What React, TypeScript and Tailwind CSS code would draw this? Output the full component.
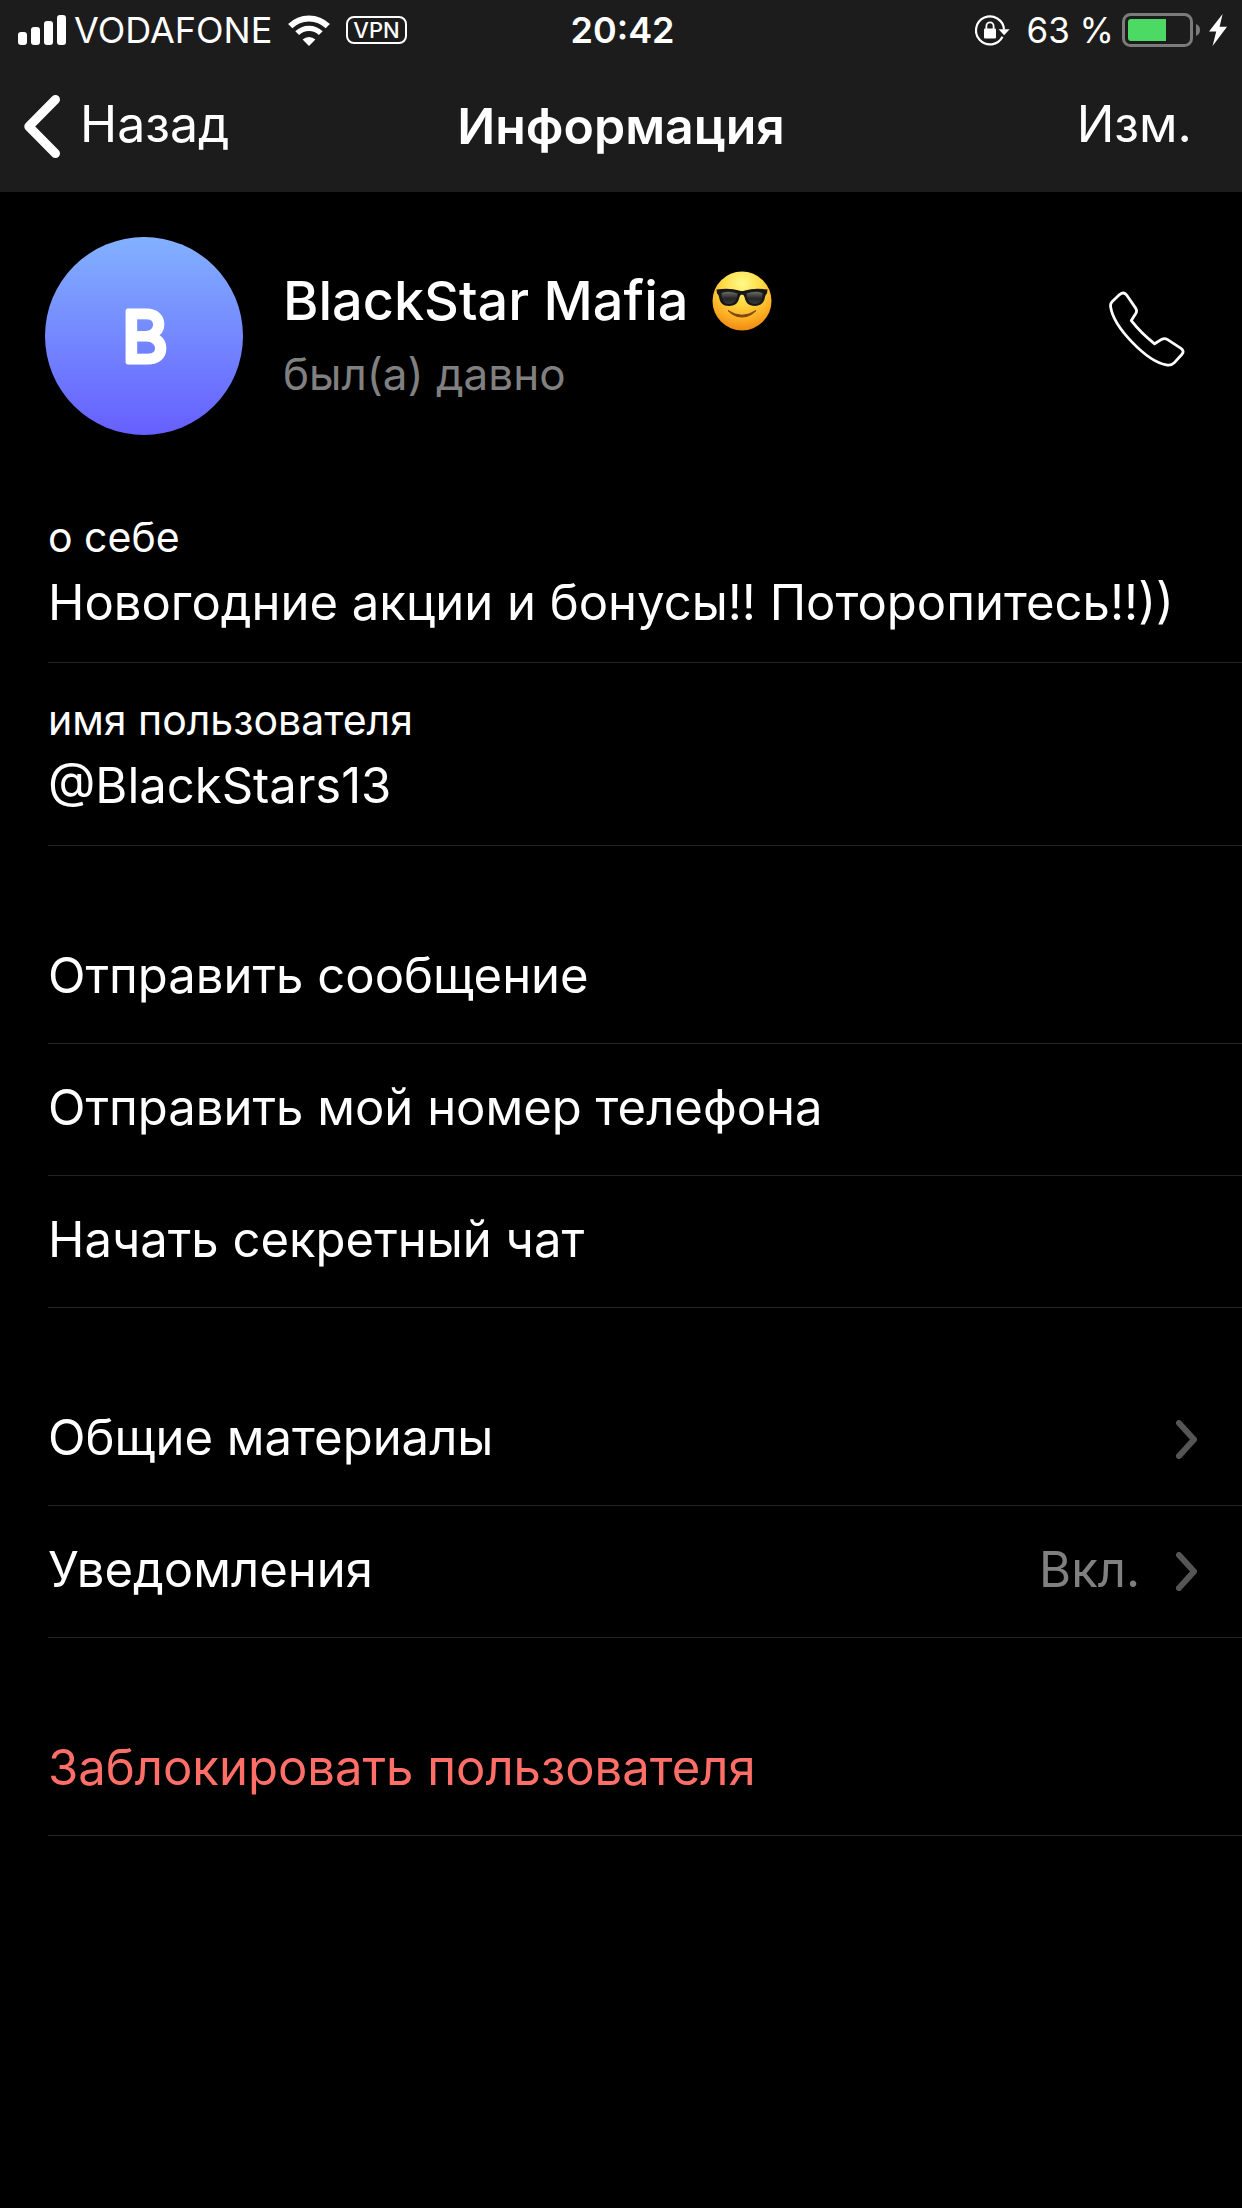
import type { ReactNode } from "react";

interface InfoFieldProps {
  label: string;
  value: string;
}

interface ActionRowProps {
  label: string;
  value?: string;
  chevron?: boolean;
  danger?: boolean;
}

function SignalIcon() {
  return (
    <svg width="48" height="30" viewBox="0 0 48 30" fill="white" aria-hidden="true">
      <rect x="0" y="17" width="9" height="13" rx="3" />
      <rect x="13" y="12" width="9" height="18" rx="3" />
      <rect x="26" y="6" width="9" height="24" rx="3" />
      <rect x="39" y="0" width="9" height="30" rx="3" />
    </svg>
  );
}

function WifiIcon() {
  return (
    <svg width="42" height="31" viewBox="0 0 42 31" aria-hidden="true">
      <path d="M2.2 11.2a26.6 26.6 0 0 1 37.6 0" fill="none" stroke="white" strokeWidth="6" />
      <path d="M9.2 18.2a16.8 16.8 0 0 1 23.6 0" fill="none" stroke="white" strokeWidth="5.4" />
      <path d="M21 31l-6.4-6.4a9.2 9.2 0 0 1 12.8 0z" fill="white" />
    </svg>
  );
}

function RotationLockIcon() {
  return (
    <svg width="35" height="31" viewBox="0 0 35 31" aria-hidden="true">
      <path d="M27.5 21.8A14 14 0 1 1 29 14.5" fill="none" stroke="white" strokeWidth="2.2" />
      <path d="M23.6 14.2h11l-5.5 6z" fill="white" />
      <rect x="9" y="13.5" width="12" height="10" rx="1" fill="white" />
      <path d="M11.4 14v-3a3.6 3.6 0 0 1 7.2 0v3" fill="none" stroke="white" strokeWidth="1.8" />
    </svg>
  );
}

function BatteryIcon() {
  return (
    <svg width="79" height="34" viewBox="0 0 79 34" aria-hidden="true">
      <rect x="1.5" y="1.5" width="68" height="31" rx="7" fill="none" stroke="#7b7b7b" strokeWidth="3" />
      <path d="M9 6h35v22H9a3 3 0 0 1-3-3V9a3 3 0 0 1 3-3z" fill="#4cd964" />
      <path d="M74 11c2.6 1 4 3.2 4 6s-1.4 5-4 6z" fill="#7b7b7b" />
    </svg>
  );
}

function BoltIcon() {
  return (
    <svg width="18" height="32" viewBox="0 0 18 32" fill="white" aria-hidden="true">
      <path d="M13.6 0L0 17.6h7.2L3.6 32 18 12.8h-7.4z" />
    </svg>
  );
}

function BackIcon() {
  return (
    <svg width="36" height="63" viewBox="0 0 36 63" aria-hidden="true">
      <path d="M31.5 4.5L4.8 31.5l26.7 27" fill="none" stroke="white" strokeWidth="9" strokeLinecap="round" strokeLinejoin="round" />
    </svg>
  );
}

function ChevronIcon() {
  return (
    <svg width="21" height="39" viewBox="0 0 21 39" aria-hidden="true">
      <path d="M3 3l15 16.5L3 36" fill="none" stroke="#555555" strokeWidth="6" strokeLinecap="round" strokeLinejoin="round" />
    </svg>
  );
}

function PhoneIcon() {
  return (
    <svg width="76" height="76" viewBox="0 0 76 76" aria-hidden="true">
      <path
        d="M3.3 10.4L10.6 3.6Q14.8 0.2 17.6 4L26.8 17.4Q28.3 19.8 26.9 22.2L22.3 29.6Q32 42 45.6 52.8L52.6 48.4Q55.8 46.8 58.6 48.6L72 57.4Q75.6 60 73 63.2L65.4 71.6Q62.4 74.8 57.4 73.9C38 70.6 4.5 36.5 1.6 15.6Q1.2 12.4 3.3 10.4Z"
        fill="none"
        stroke="white"
        strokeWidth="2.8"
        strokeLinejoin="round"
      />
    </svg>
  );
}

function SunglassesEmoji() {
  return (
    <svg width="60" height="60" viewBox="0 0 60 60" role="img" aria-label="😎">
      <defs>
        <radialGradient id="face" cx="0.5" cy="0.2" r="0.8">
          <stop offset="0" stopColor="#fffa8a" />
          <stop offset="0.4" stopColor="#ffdc45" />
          <stop offset="0.75" stopColor="#fdb024" />
          <stop offset="1" stopColor="#f08a14" />
        </radialGradient>
        <linearGradient id="lens" x1="0" y1="0" x2="0" y2="1">
          <stop offset="0" stopColor="#6a6a68" />
          <stop offset="0.55" stopColor="#252525" />
          <stop offset="1" stopColor="#3a3a3a" />
        </linearGradient>
      </defs>
      <circle cx="30" cy="30" r="29.5" fill="url(#face)" />
      <path d="M16 39.5Q30 49 44 39.5Q38 46 30 46T16 39.5Z" fill="#7a4210" stroke="#7a4210" strokeWidth="1" />
      <path
        d="M4.5 18.5Q18 16.5 27 19.5Q30 20.5 33 19.5Q42 16.5 55.5 18.5L55 22.5Q53.5 23 53 26C52 32 49 35 43 35C36 35 33.5 31 32.5 26Q32 23.5 30 23.5T27.5 26C26.5 31 24 35 17 35C11 35 8 32 7 26Q6.5 23 5 22.5Z"
        fill="#171717"
      />
      <path d="M9.5 22Q17 19.5 25.5 22.5C25 29 22.5 33 17 33C11.5 33 9.5 29 9.5 22Z" fill="url(#lens)" />
      <path d="M50.5 22Q43 19.5 34.5 22.5C35 29 37.5 33 43 33C48.5 33 50.5 29 50.5 22Z" fill="url(#lens)" />
    </svg>
  );
}

function Avatar() {
  return (
    <svg className="shrink-0" width="198" height="198" viewBox="0 0 198 198">
      <defs>
        <linearGradient id="avatar" x1="0" y1="0" x2="0" y2="1">
          <stop offset="0" stopColor="#82b1ff" />
          <stop offset="1" stopColor="#665fff" />
        </linearGradient>
      </defs>
      <circle cx="99" cy="99" r="99" fill="url(#avatar)" />
      <text
        x="100"
        y="125"
        textAnchor="middle"
        fontSize="70"
        fontWeight="400"
        fill="white"
        stroke="white"
        strokeWidth="5"
        strokeLinejoin="round"
      >
        B
      </text>
    </svg>
  );
}

function StatusBar() {
  return (
    <div className="grid h-[60px] grid-cols-[1fr_auto_1fr] items-center pr-[15px] pl-[18px] text-[36px]">
      <div className="flex items-center gap-4">
        <div className="flex items-center gap-2">
          <SignalIcon />
          <span>VODAFONE</span>
        </div>
        <WifiIcon />
        <span className="flex h-7 items-center rounded-lg border-2 border-white px-[5px] text-[22px] font-medium">VPN</span>
      </div>
      <time className="font-semibold">20:42</time>
      <div className="flex items-center justify-end gap-2">
        <RotationLockIcon />
        <span className="ml-2 text-[35px]">63 %</span>
        <BatteryIcon />
        <BoltIcon />
      </div>
    </div>
  );
}

function NavBar() {
  return (
    <nav className="grid h-[132px] grid-cols-[1fr_auto_1fr] items-center px-6 text-[50px]">
      <button className="flex items-center gap-5 justify-self-start">
        <BackIcon />
        <span className="pb-1">Назад</span>
      </button>
      <h1 className="font-semibold">Информация</h1>
      <button className="justify-self-end pr-[26px] pb-1">Изм.</button>
    </nav>
  );
}

function InfoField({ label, value }: InfoFieldProps) {
  return (
    <div className="ml-12 flex h-[183px] flex-col justify-center border-b border-[#242424] pt-1">
      <dt className="text-[41px] leading-[60px]">{label}</dt>
      <dd className="text-[49px] leading-[72px] whitespace-nowrap">{value}</dd>
    </div>
  );
}

function ActionRow({ label, value, chevron, danger }: ActionRowProps) {
  return (
    <li className="ml-12 border-b border-[#242424]">
      <button className={`flex h-[131px] w-full items-center pr-[45px] text-left text-[49px] ${danger ? "text-[#ff6f68]" : ""}`}>
        <span className="grow pb-1">{label}</span>
        {value && <span className="mr-9 pb-1 text-[#808080]">{value}</span>}
        {chevron && <ChevronIcon />}
      </button>
    </li>
  );
}

function Section({ children }: { children: ReactNode }) {
  return <ul className="pt-[66px]">{children}</ul>;
}

export default function App() {
  return (
    <div className="min-h-screen bg-black font-['Inter',sans-serif] text-white">
      <header className="bg-[#1c1c1c]">
        <StatusBar />
        <NavBar />
      </header>
      <main>
        <section className="flex items-start p-[45px]">
          <Avatar />
          <div className="ml-10 grow pt-7">
            <h2 className="flex items-center gap-6 text-[54px] leading-[72px] font-medium">
              BlackStar Mafia
              <SunglassesEmoji />
            </h2>
            <p className="text-[44px] leading-[74px] text-[#808080]">был(а) давно</p>
          </div>
          <button className="mt-[54px] mr-3" aria-label="Позвонить">
            <PhoneIcon />
          </button>
        </section>
        <dl>
          <InfoField label="о себе" value="Новогодние акции и бонусы!! Поторопитесь!!))" />
          <InfoField label="имя пользователя" value="@BlackStars13" />
        </dl>
        <Section>
          <ActionRow label="Отправить сообщение" />
          <ActionRow label="Отправить мой номер телефона" />
          <ActionRow label="Начать секретный чат" />
        </Section>
        <Section>
          <ActionRow label="Общие материалы" chevron />
          <ActionRow label="Уведомления" value="Вкл." chevron />
        </Section>
        <Section>
          <ActionRow label="Заблокировать пользователя" danger />
        </Section>
      </main>
    </div>
  );
}
